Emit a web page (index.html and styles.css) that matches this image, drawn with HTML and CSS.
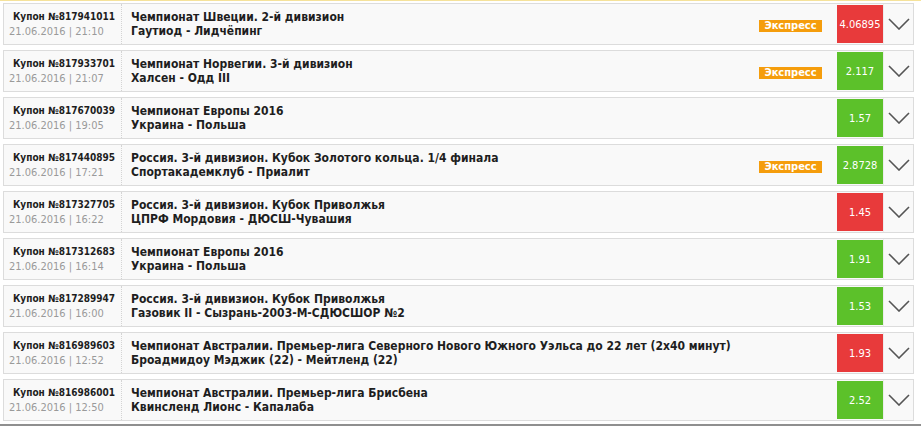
FILE: index.html
```html
<!DOCTYPE html>
<html lang="ru">
<head>
<meta charset="utf-8">
<link rel="stylesheet" href="styles.css">
</head>
<body>
<div class="list">
  <div class="row">
    <div class="meta"><div class="coupon">Купон №817941011</div><div class="date">21.06.2016 | 21:10</div></div>
    <div class="event"><div>Чемпионат Швеции. 2-й дивизион</div><div>Гаутиод - Лидчёпинг</div></div>
    <span class="badge">Экспресс</span>
    <div class="odd lose">4.06895</div>
    <div class="toggle"><svg width="22" height="12" viewBox="0 0 22 12"><polyline points="1,1 11,11 21,1" fill="none" stroke="#555" stroke-width="1.6"/></svg></div>
  </div>
  <div class="row">
    <div class="meta"><div class="coupon">Купон №817933701</div><div class="date">21.06.2016 | 21:07</div></div>
    <div class="event"><div>Чемпионат Норвегии. 3-й дивизион</div><div>Халсен - Одд III</div></div>
    <span class="badge">Экспресс</span>
    <div class="odd win">2.117</div>
    <div class="toggle"><svg width="22" height="12" viewBox="0 0 22 12"><polyline points="1,1 11,11 21,1" fill="none" stroke="#555" stroke-width="1.6"/></svg></div>
  </div>
  <div class="row">
    <div class="meta"><div class="coupon">Купон №817670039</div><div class="date">21.06.2016 | 19:05</div></div>
    <div class="event"><div>Чемпионат Европы 2016</div><div>Украина - Польша</div></div>
    <div class="odd win">1.57</div>
    <div class="toggle"><svg width="22" height="12" viewBox="0 0 22 12"><polyline points="1,1 11,11 21,1" fill="none" stroke="#555" stroke-width="1.6"/></svg></div>
  </div>
  <div class="row">
    <div class="meta"><div class="coupon">Купон №817440895</div><div class="date">21.06.2016 | 17:21</div></div>
    <div class="event"><div>Россия. 3-й дивизион. Кубок Золотого кольца. 1/4 финала</div><div>Спортакадемклуб - Приалит</div></div>
    <span class="badge">Экспресс</span>
    <div class="odd win">2.8728</div>
    <div class="toggle"><svg width="22" height="12" viewBox="0 0 22 12"><polyline points="1,1 11,11 21,1" fill="none" stroke="#555" stroke-width="1.6"/></svg></div>
  </div>
  <div class="row">
    <div class="meta"><div class="coupon">Купон №817327705</div><div class="date">21.06.2016 | 16:22</div></div>
    <div class="event"><div>Россия. 3-й дивизион. Кубок Приволжья</div><div>ЦПРФ Мордовия - ДЮСШ-Чувашия</div></div>
    <div class="odd lose">1.45</div>
    <div class="toggle"><svg width="22" height="12" viewBox="0 0 22 12"><polyline points="1,1 11,11 21,1" fill="none" stroke="#555" stroke-width="1.6"/></svg></div>
  </div>
  <div class="row">
    <div class="meta"><div class="coupon">Купон №817312683</div><div class="date">21.06.2016 | 16:14</div></div>
    <div class="event"><div>Чемпионат Европы 2016</div><div>Украина - Польша</div></div>
    <div class="odd win">1.91</div>
    <div class="toggle"><svg width="22" height="12" viewBox="0 0 22 12"><polyline points="1,1 11,11 21,1" fill="none" stroke="#555" stroke-width="1.6"/></svg></div>
  </div>
  <div class="row">
    <div class="meta"><div class="coupon">Купон №817289947</div><div class="date">21.06.2016 | 16:00</div></div>
    <div class="event"><div>Россия. 3-й дивизион. Кубок Приволжья</div><div>Газовик II - Сызрань-2003-М-СДЮСШОР №2</div></div>
    <div class="odd win">1.53</div>
    <div class="toggle"><svg width="22" height="12" viewBox="0 0 22 12"><polyline points="1,1 11,11 21,1" fill="none" stroke="#555" stroke-width="1.6"/></svg></div>
  </div>
  <div class="row">
    <div class="meta"><div class="coupon">Купон №816989603</div><div class="date">21.06.2016 | 12:52</div></div>
    <div class="event"><div>Чемпионат Австралии. Премьер-лига Северного Нового Южного Уэльса до 22 лет (2х40 минут)</div><div>Броадмидоу Мэджик (22) - Мейтленд (22)</div></div>
    <div class="odd lose">1.93</div>
    <div class="toggle"><svg width="22" height="12" viewBox="0 0 22 12"><polyline points="1,1 11,11 21,1" fill="none" stroke="#555" stroke-width="1.6"/></svg></div>
  </div>
  <div class="row">
    <div class="meta"><div class="coupon">Купон №816986001</div><div class="date">21.06.2016 | 12:50</div></div>
    <div class="event"><div>Чемпионат Австралии. Премьер-лига Брисбена</div><div>Квинсленд Лионс - Капалаба</div></div>
    <div class="odd win">2.52</div>
    <div class="toggle"><svg width="22" height="12" viewBox="0 0 22 12"><polyline points="1,1 11,11 21,1" fill="none" stroke="#555" stroke-width="1.6"/></svg></div>
  </div>
</div>
<div class="bottom-line"></div>
</body>
</html>
```

FILE: styles.css
```css
html, body {
  margin: 0;
  padding: 0;
  background: #fff;
}
body {
  font-family: "DejaVu Sans Condensed", "DejaVu Sans", sans-serif;
  color: #1e1e1e;
}
.list {
  border-top: 1px solid #f5e29a;
  padding: 2px 7px 0 3px;
  display: flex;
  flex-direction: column;
  gap: 5px;
}
.row {
  box-sizing: border-box;
  height: 42px;
  border: 1px solid #dcdcdc;
  background: #f9f9f9;
  display: flex;
  align-items: center;
}
.meta {
  box-sizing: border-box;
  width: 118px;
  height: 100%;
  border-right: 1px dotted #d4d4d4;
  display: flex;
  flex-direction: column;
  justify-content: center;
}
.coupon {
  font-size: 10px;
  font-weight: bold;
  line-height: 16px;
  padding-left: 9px;
  white-space: nowrap;
}
.date {
  font-size: 11px;
  color: #9a9a9a;
  line-height: 14px;
  padding-left: 5px;
  white-space: nowrap;
}
.event {
  flex: 1;
  padding-left: 9px;
  font-size: 12px;
  font-weight: bold;
  line-height: 14px;
  white-space: nowrap;
}
.badge {
  background: #f59d0c;
  color: #fff;
  font-size: 11px;
  font-weight: bold;
  line-height: 12px;
  height: 12px;
  width: 63px;
  text-align: center;
  margin-right: 15px;
  margin-top: 3px;
}
.odd {
  width: 46px;
  height: 38px;
  color: #fff;
  font-size: 11px;
  display: flex;
  align-items: center;
  justify-content: center;
}
.lose { background: #e83a3b; }
.win { background: #5cc12a; }
.toggle {
  box-sizing: border-box;
  width: 30px;
  height: 100%;
  border-left: 1px solid #ececec;
  display: flex;
  align-items: center;
  justify-content: center;
}
.bottom-line {
  margin-top: 3px;
  height: 2px;
  background: #8f8f8f;
}
```
